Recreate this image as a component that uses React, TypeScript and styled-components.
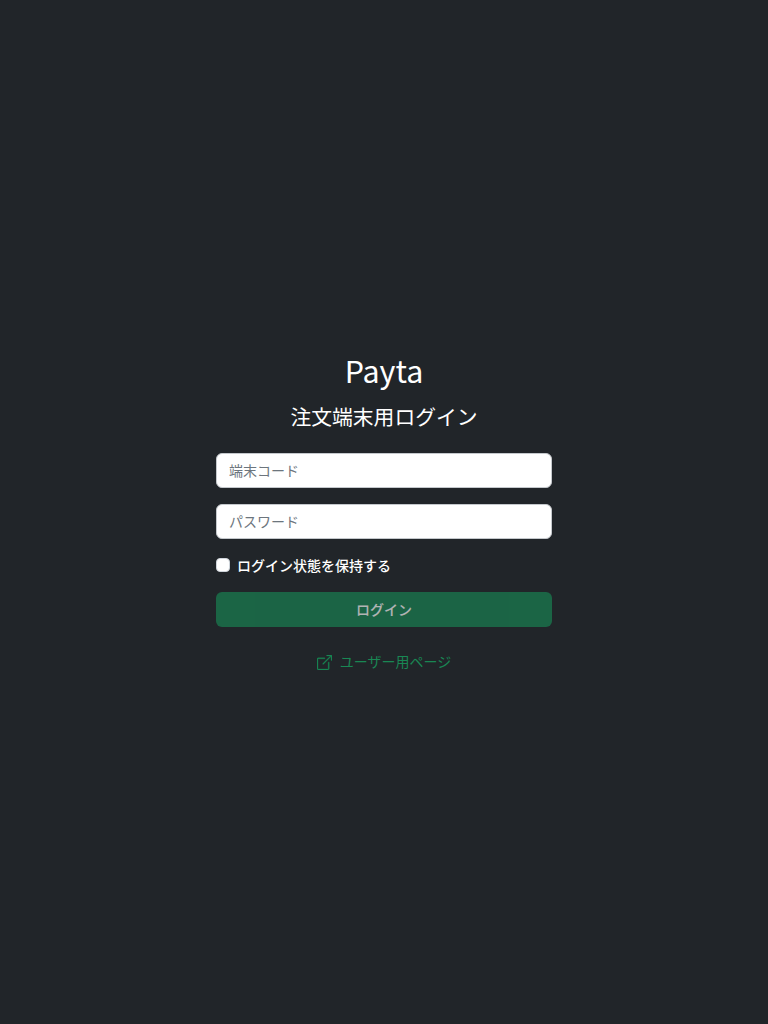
import React from 'react';
import styled, { createGlobalStyle } from 'styled-components';

const Global = createGlobalStyle`
  html, body { margin: 0; padding: 0; height: 100%; background: #212529; }
  #root { height: 100%; }
  * { box-sizing: border-box; }
  body {
    font-family: "Noto Sans CJK JP", "Noto Sans", sans-serif;
    color: #fff;
  }
`
const Page = styled.main`
  min-height: 1024px;
  display: flex;
  align-items: center;
  justify-content: center;
`
const Form = styled.form`
  width: 336px;
  display: flex;
  flex-direction: column;
  align-items: stretch;
`
const Brand = styled.h1`
  margin: 0 0 12px;
  font-size: 30.4px;
  line-height: 38px;
  font-weight: 400;
  text-align: center;
`
const Title = styled.h2`
  margin: 0 0 22px;
  font-size: 20.8px;
  line-height: 30px;
  font-weight: 400;
  text-align: center;
`
const Input = styled.input`
  height: 35px;
  margin-bottom: 16px;
  padding: 0 12px 2px;
  border: 1px solid #c4c8cc;
  border-radius: 6px;
  background: #fff;
  font-size: 14px;
  font-family: inherit;
  color: #212529;
  &::placeholder { color: #6c757d; opacity: 1; }
`
const CheckRow = styled.label`
  display: flex;
  align-items: center;
  gap: 7px;
  height: 21px;
  margin-top: -1px;
  margin-bottom: 17px;
  font-size: 14px;
  font-weight: 500;
`
const Check = styled.input`
  appearance: none;
  width: 14px;
  height: 14px;
  margin: 0;
  background: #fff;
  border: 1px solid #ced4da;
  border-radius: 4px;
`
const Submit = styled.button`
  height: 35px;
  padding: 0 0 2px;
  border: 0;
  border-radius: 6px;
  background: #198754;
  color: #fff;
  opacity: 0.65;
  font-size: 14px;
  font-weight: 500;
  font-family: inherit;
`
const UserLink = styled.a`
  margin-top: 25px;
  height: 21px;
  display: flex;
  align-items: center;
  justify-content: center;
  gap: 8px;
  color: #198754;
  font-size: 14px;
  line-height: 21px;
  text-decoration: none;
`
const LinkText = styled.span`
  padding-bottom: 2px;
`

const ExternalIcon = () => (
  <svg width="15" height="15" viewBox="0 0 16 16" fill="currentColor" stroke="currentColor" strokeWidth="0.35">
    <path fillRule="evenodd" d="M8.636 3.5a.5.5 0 0 0-.5-.5H1.5A1.5 1.5 0 0 0 0 4.5v10A1.5 1.5 0 0 0 1.5 16h10a1.5 1.5 0 0 0 1.5-1.5V7.864a.5.5 0 0 0-1 0V14.5a.5.5 0 0 1-.5.5h-10a.5.5 0 0 1-.5-.5v-10a.5.5 0 0 1 .5-.5h6.636a.5.5 0 0 0 .5-.5z" />
    <path fillRule="evenodd" d="M16 .5a.5.5 0 0 0-.5-.5h-5a.5.5 0 0 0 0 1h3.793L6.146 9.146a.5.5 0 1 0 .708.708L15 1.707V5.5a.5.5 0 0 0 1 0v-5z" />
  </svg>
)

const App = () => {
  return (
    <Page>
      <Global />
      <Form onSubmit={e => e.preventDefault()}>
        <Brand>Payta</Brand>
        <Title>注文端末用ログイン</Title>
        <Input placeholder="端末コード" />
        <Input type="password" placeholder="パスワード" />
        <CheckRow>
          <Check type="checkbox" />
          ログイン状態を保持する
        </CheckRow>
        <Submit type="submit" disabled>ログイン</Submit>
        <UserLink href="#">
          <ExternalIcon />
          <LinkText>ユーザー用ページ</LinkText>
        </UserLink>
      </Form>
    </Page>
  );
};

export default App;
